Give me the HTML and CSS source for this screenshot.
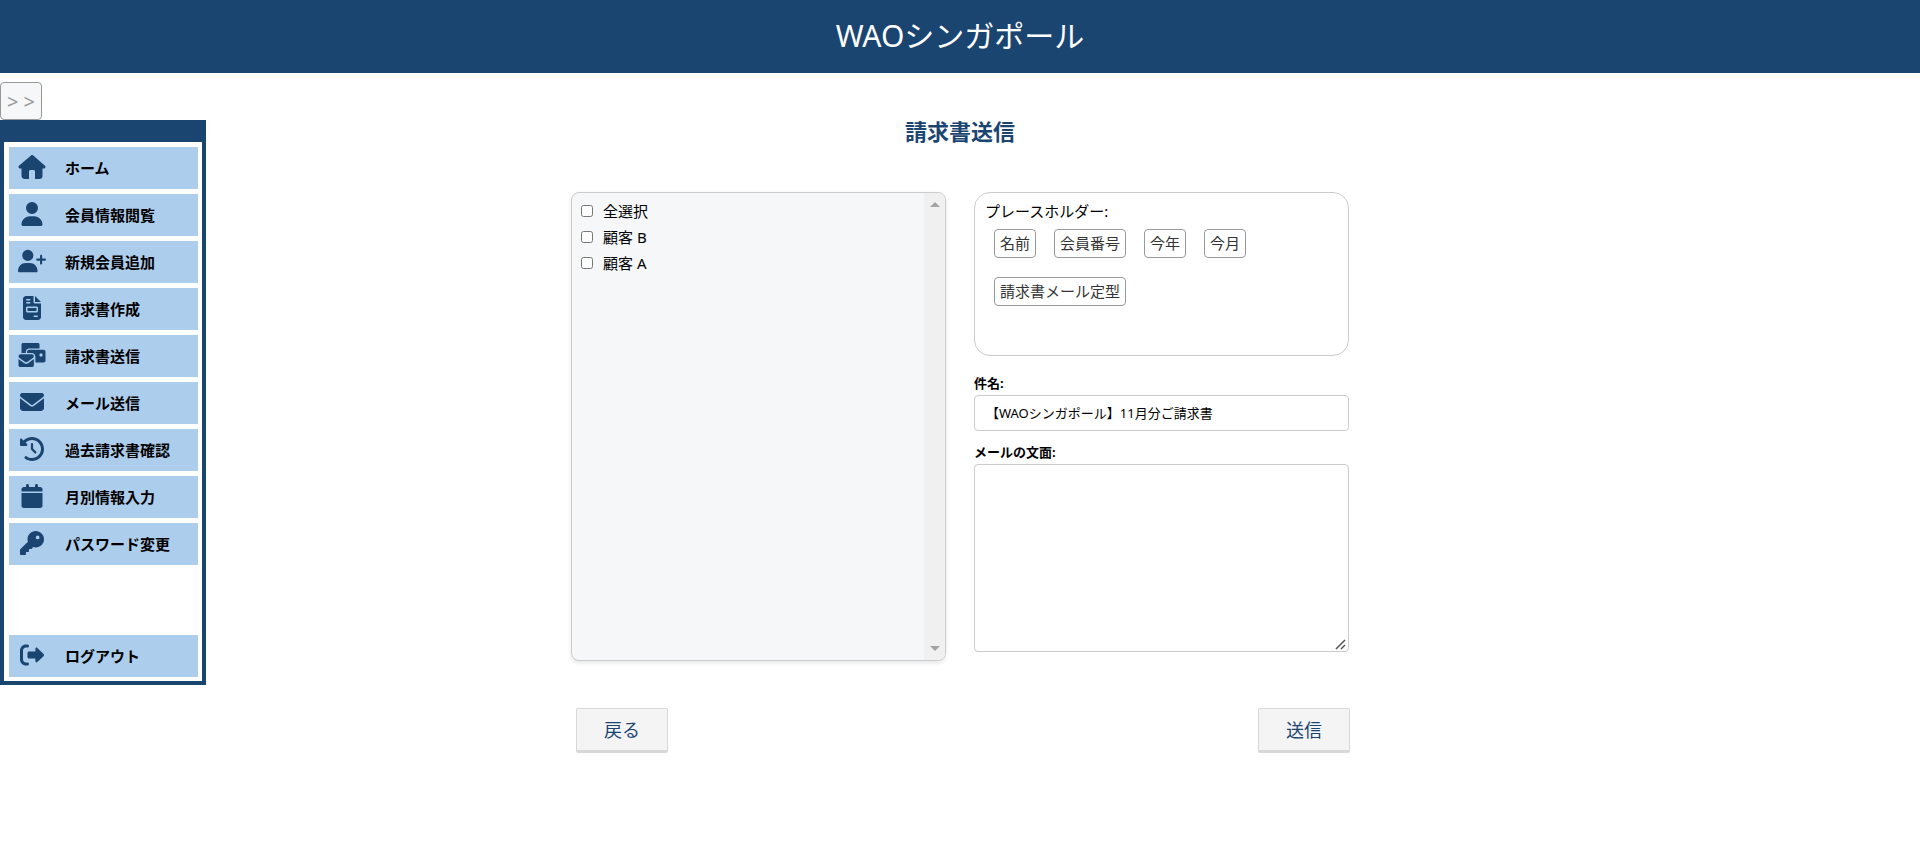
FILE: index.html
```html
<!DOCTYPE html>
<html lang="ja">
<head>
    <meta charset="UTF-8">
    <meta name="viewport" content="width=device-width, initial-scale=1.0">
    <title>請求書送信</title>
    <link rel="stylesheet" href="styles.css">
</head>
<body>

    <header class="header">
        <h1>WAOシンガポール</h1>
    </header>

    <div class="layout">
        <aside class="side">
            <button type="button" class="toggleBtn">&gt; &gt;</button>
            <nav class="sidebar">
                <a class="navItem" href="#">
                    <svg viewBox="0 0 576 512"><path d="M575.8 255.500c0 18-15 32.100-32 32.100h-32l.7 160.200c0 35.300-28.700 64.200-64 64.200H352V352c0-17.700-14.300-32-32-32h-64c-17.700 0-32 14.300-32 32v160h-96c-35.300 0-64-28.700-64-64V287.600H32c-18 0-32-14-32-32.100 0-9 3-17 10-24L266.400 8c7-7 15-8 22-8s15 2 21 7l255.400 224.500c8 7 12 15 11 24z"/></svg>
                    <span>ホーム</span>
                </a>
                <a class="navItem" href="#">
                    <svg viewBox="0 0 448 512"><path d="M224 256a128 128 0 1 0 0-256 128 128 0 1 0 0 256zm-45.700 48C79.800 304 0 383.800 0 482.300 0 498.700 13.300 512 29.700 512h388.600c16.400 0 29.700-13.300 29.700-29.700C448 383.800 368.200 304 269.700 304h-91.400z"/></svg>
                    <span>会員情報閲覧</span>
                </a>
                <a class="navItem" href="#">
                    <svg viewBox="0 0 640 512"><path d="M96 128a128 128 0 1 1 256 0 128 128 0 1 1-256 0zM0 482.300C0 383.800 79.800 304 178.300 304h91.400C368.200 304 448 383.800 448 482.300c0 16.400-13.300 29.700-29.700 29.700H29.700C13.300 512 0 498.700 0 482.300zM504 312v-64h-64c-13.300 0-24-10.700-24-24s10.700-24 24-24h64v-64c0-13.300 10.700-24 24-24s24 10.700 24 24v64h64c13.300 0 24 10.700 24 24s-10.700 24-24 24h-64v64c0 13.300-10.700 24-24 24s-24-10.700-24-24z"/></svg>
                    <span>新規会員追加</span>
                </a>
                <a class="navItem" href="#">
                    <svg viewBox="0 0 384 512"><path fill-rule="evenodd" d="M64 0C28.700 0 0 28.700 0 64v384c0 35.300 28.700 64 64 64h256c35.300 0 64-28.700 64-64V160H256c-17.700 0-32-14.300-32-32V0H64zm192 0v128h128L256 0zM80 64h64c8.800 0 16 7.200 16 16s-7.200 16-16 16H80c-8.800 0-16-7.200-16-16s7.200-16 16-16zm0 64h64c8.800 0 16 7.200 16 16s-7.200 16-16 16H80c-8.800 0-16-7.200-16-16s7.200-16 16-16zm16 96h192c17.700 0 32 14.300 32 32v64c0 17.700-14.300 32-32 32H96c-17.700 0-32-14.300-32-32v-64c0-17.700 14.300-32 32-32zm0 32v64h192v-64H96zm144 160h64c8.800 0 16 7.200 16 16s-7.200 16-16 16h-64c-8.800 0-16-7.200-16-16s7.200-16 16-16z"/></svg>
                    <span>請求書作成</span>
                </a>
                <a class="navItem" href="#">
                    <svg viewBox="0 0 576 512"><path d="M96 0C78.300 0 64 14.300 64 32v182h92v-30c0-38 30-68 68-68h224V32c0-17.700-14.300-32-32-32H96z"/><path fill-rule="evenodd" d="M224 144c-22 0-40 18-40 40v30h96c44 0 80 36 80 80v122h180c20 0 36-16 36-36V184c0-22-18-40-40-40H224zm240 80h32c8.800 0 16 7.200 16 16v32c0 8.800-7.200 16-16 16h-32c-8.800 0-16-7.200-16-16v-32c0-8.800 7.200-16 16-16z"/><path d="M48 242c-26 0-48 16-48 42 0 12 6 22 15 29l118 88c18 14 44 14 62 0l118-88c9-7 15-17 15-29 0-26-22-42-48-42H48zM0 342v130c0 22 18 40 40 40h248c22 0 40-18 40-40V342l-116 87c-29 22-67 22-96 0L0 342z"/></svg>
                    <span>請求書送信</span>
                </a>
                <a class="navItem" href="#">
                    <svg viewBox="0 0 512 512"><path d="M48 64C21.500 64 0 85.500 0 112c0 15.100 7.100 29.300 19.200 38.400l217.600 163.200c11.400 8.500 27 8.500 38.400 0l217.600-163.200c12.100-9.100 19.200-23.300 19.200-38.400 0-26.500-21.500-48-48-48H48zM0 176v208c0 35.300 28.700 64 64 64h384c35.300 0 64-28.700 64-64V176L294.400 339.200c-22.800 17.100-54 17.100-76.800 0L0 176z"/></svg>
                    <span>メール送信</span>
                </a>
                <a class="navItem" href="#">
                    <svg viewBox="0 0 512 512"><path d="M75 75 41 41C25.900 25.900 0 36.600 0 57.900V168c0 13.300 10.700 24 24 24h110.100c21.400 0 32.100-25.900 17-41l-30.800-30.800C155 85.500 203 64 256 64c106 0 192 86 192 192s-86 192-192 192c-40.800 0-78.600-12.700-109.700-34.400-14.500-10.100-34.400-6.600-44.600 7.900s-6.600 34.400 7.900 44.600C151.200 495 201.700 512 256 512c141.400 0 256-114.600 256-256S397.400 0 256 0C185.300 0 121.300 28.700 75 75zm181 53c-13.300 0-24 10.700-24 24v104c0 6.400 2.500 12.500 7 17l72 72c9.400 9.400 24.600 9.400 33.900 0s9.400-24.600 0-33.900l-65-65V152c0-13.300-10.700-24-24-24z"/></svg>
                    <span>過去請求書確認</span>
                </a>
                <a class="navItem" href="#">
                    <svg viewBox="0 0 448 512"><path d="M96 32v32H48C21.500 64 0 85.500 0 112v48h448v-48c0-26.500-21.500-48-48-48h-48V32c0-17.700-14.300-32-32-32s-32 14.300-32 32v32H160V32c0-17.700-14.300-32-32-32S96 14.300 96 32zm352 160H0v272c0 26.500 21.500 48 48 48h352c26.500 0 48-21.500 48-48V192z"/></svg>
                    <span>月別情報入力</span>
                </a>
                <a class="navItem" href="#">
                    <svg viewBox="0 0 512 512"><path d="M336 352c97.200 0 176-78.800 176-176S433.200 0 336 0 160 78.800 160 176c0 18.700 2.900 36.800 8.300 53.700L7 391c-4.500 4.500-7 10.600-7 17v80c0 13.300 10.700 24 24 24h80c13.300 0 24-10.700 24-24v-40h40c13.300 0 24-10.700 24-24v-40h40c6.400 0 12.500-2.500 17-7l33.300-33.300c16.900 5.400 35 8.300 53.700 8.300zm40-256a40 40 0 1 1 0 80 40 40 0 1 1 0-80z"/></svg>
                    <span>パスワード変更</span>
                </a>
                <a class="navItem logout" href="#">
                    <svg viewBox="0 0 512 512"><path d="M160 32c17.700 0 32 14.300 32 32s-14.300 32-32 32h-32c-35.300 0-64 28.700-64 64v192c0 35.300 28.700 64 64 64h32c17.700 0 32 14.300 32 32s-14.300 32-32 32h-32C57.300 480 0 422.700 0 352V160C0 89.300 57.300 32 128 32h32zm343 200L370 106c-16-16-42-6-42 17v58H192c-17.700 0-32 14.300-32 32v86c0 17.700 14.300 32 32 32h136v58c0 23 26 33 42 17l133-126c12-12 12-36 0-48z"/></svg>
                    <span>ログアウト</span>
                </a>
            </nav>
        </aside>

        <main class="main">
            <h2>請求書送信</h2>
            <form class="mailForm">
                <div class="columns">
                    <div class="customerBox">
                        <div class="customerList">
                            <label><input type="checkbox" id="select-all">全選択</label>
                            <label><input type="checkbox" name="customer" value="B">顧客 B</label>
                            <label><input type="checkbox" name="customer" value="A">顧客 A</label>
                        </div>
                        <div class="scrollTrack" aria-hidden="true">
                            <svg viewBox="0 0 10 5"><path d="M0 5 5 0l5 5z"/></svg>
                            <svg viewBox="0 0 10 5"><path d="M0 0l5 5 5-5z"/></svg>
                        </div>
                    </div>

                    <div class="mailColumn">
                        <div class="placeholderBox">
                            <p>プレースホルダー:</p>
                            <div class="chips">
                                <button type="button">名前</button>
                                <button type="button">会員番号</button>
                                <button type="button">今年</button>
                                <button type="button">今月</button>
                                <button type="button">請求書メール定型</button>
                            </div>
                        </div>
                        <label for="subject">件名:</label>
                        <input type="text" id="subject" autocomplete="off" value="【WAOシンガポール】11月分ご請求書">
                        <label for="message">メールの文面:</label>
                        <textarea id="message"></textarea>
                    </div>
                </div>

                <div class="actions">
                    <button type="button">戻る</button>
                    <button type="submit">送信</button>
                </div>
            </form>
        </main>
    </div>

</body>
</html>
```

FILE: styles.css
```css
* {
    margin: 0;
    padding: 0;
    box-sizing: border-box;
}
body {
    font-family: "Noto Sans", "Noto Sans CJK JP", sans-serif;
    font-size: 15px;
    color: black;
    background-color: white;
}
button, input, textarea {
    font-family: inherit;
}
.header {
    display: flex;
    justify-content: center;
    align-items: center;
    height: 73px;
    padding-bottom: 6px;
    background-color: #1b4571;
    color: white;
}
.header h1 {
    font-size: 30px;
    font-weight: 400;
}
.layout {
    display: grid;
    grid-template-columns: 206px 1fr 206px;
    align-items: start;
}

/* sidebar */
.side {
    padding-top: 9px;
}
.toggleBtn {
    display: block;
    width: 42px;
    height: 38px;
    border: 1px solid #999;
    border-radius: 4px;
    background-color: #f5f7f9;
    color: #999;
    font-size: 20px;
}
.sidebar {
    display: flex;
    flex-direction: column;
    gap: 5px;
    padding: 5px 4px 4px 5px;
    border: 4px solid #1b4571;
    border-top-width: 22px;
}
.navItem {
    display: flex;
    align-items: center;
    gap: 19px;
    height: 42px;
    padding: 0 0 2px 9px;
    background-color: #adcdec;
    color: black;
    font-weight: 700;
    text-decoration: none;
}
.navItem svg {
    width: 28px;
    height: 24px;
    fill: #1b4571;
}
.logout {
    margin-top: 65px;
}

/* form */
.main {
    padding-top: 42px;
}
.main h2 {
    text-align: center;
    font-size: 22px;
    line-height: 32px;
    color: #1b4571;
}
.mailForm {
    width: 778px;
    max-width: 100%;
    margin: 45px auto 0;
}
.columns {
    display: grid;
    grid-template-columns: 1fr 1fr;
    gap: 28px;
    align-items: start;
}
.customerBox {
    display: flex;
    height: 469px;
    border: 1px solid #ccc;
    border-radius: 8px;
    background-color: #f5f7f9;
    box-shadow: 0 2px 4px rgba(0, 0, 0, .1);
    overflow: hidden;
}
.customerList {
    flex: 1;
    padding: 5px 9px;
    overflow-y: auto;
}
.customerList label {
    display: flex;
    align-items: center;
    gap: 10px;
    line-height: 26px;
}
.customerList input {
    width: 12px;
    height: 12px;
}
.scrollTrack {
    display: flex;
    flex-direction: column;
    justify-content: space-between;
    align-items: center;
    width: 21px;
    padding: 9px 0;
    background-color: #f0f0f0;
}
.scrollTrack svg {
    width: 10px;
    height: 5px;
    fill: #a3a3a3;
}
.placeholderBox {
    height: 164px;
    padding: 7px 10px;
    border: 1px solid #ccc;
    border-radius: 16px;
    margin-bottom: 16px;
}
.placeholderBox p {
    line-height: 22px;
}
.chips {
    display: flex;
    flex-wrap: wrap;
    gap: 19px 18px;
    padding: 7px 9px;
}
.chips button {
    height: 29px;
    padding: 0 5px 2px;
    border: 1px solid #999;
    border-radius: 4px;
    background-color: white;
    color: #333;
    font-size: 15px;
}
.mailColumn label {
    display: block;
    padding-bottom: 1px;
    font-size: 13px;
    font-weight: 700;
    line-height: 22px;
}
.mailColumn input, .mailColumn textarea {
    display: block;
    width: 100%;
    border: 1px solid #ccc;
    border-radius: 4px;
    padding: 8px 12px;
    font-size: 13px;
}
.mailColumn input {
    height: 36px;
    padding: 7px 11px 9px;
    margin-bottom: 10px;
}
.mailColumn textarea {
    height: 188px;
}
.mailColumn textarea::-webkit-resizer {
    background: url("data:image/svg+xml,%3Csvg xmlns='http://www.w3.org/2000/svg' viewBox='0 0 15 15'%3E%3Cpath stroke='%23555' stroke-width='1.5' d='M3 13l9-9M8 13l4-4'/%3E%3C/svg%3E") no-repeat;
}
.actions {
    display: flex;
    justify-content: space-between;
    margin: 47px -1px 0 5px;
}
.actions button {
    width: 92px;
    height: 45px;
    padding-bottom: 1px;
    border: 1px solid #d8d8d8;
    border-bottom-width: 3px;
    border-radius: 2px;
    background-color: #f4f4f4;
    color: #1b4571;
    font-size: 18px;
}
```
